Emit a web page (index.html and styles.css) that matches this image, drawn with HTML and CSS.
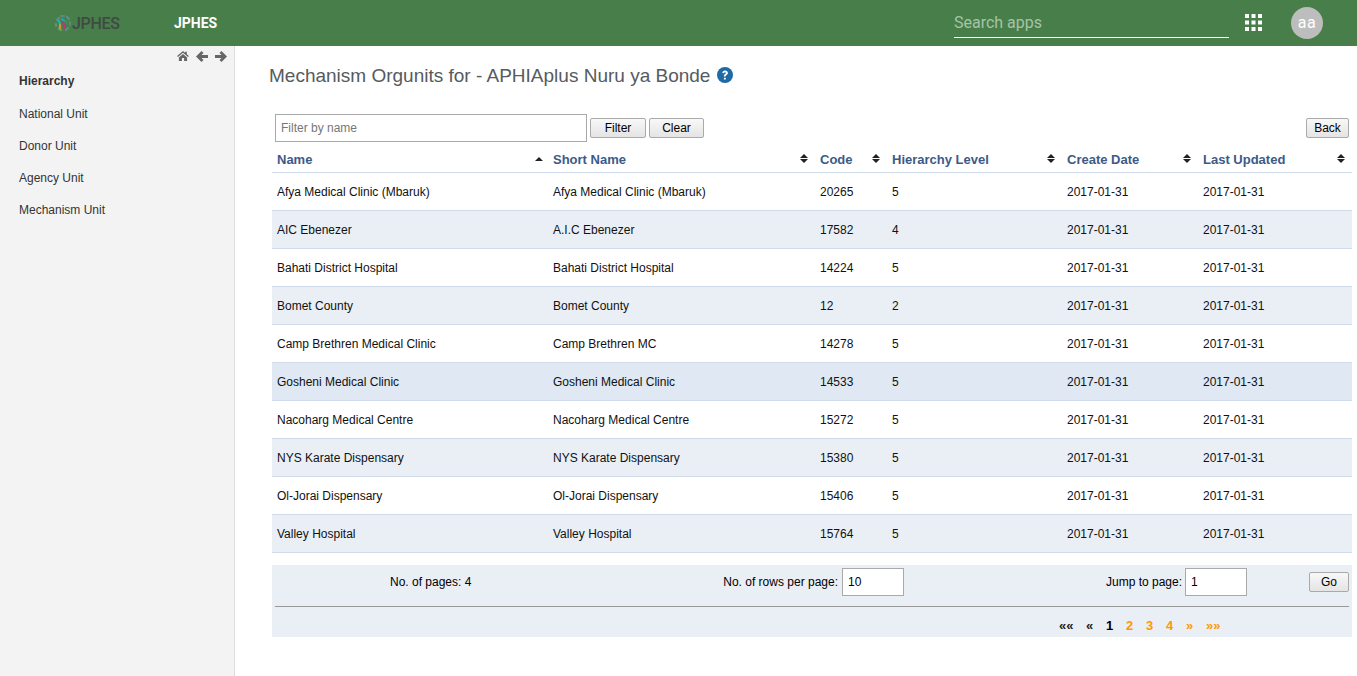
FILE: index.html
```html
<!DOCTYPE html>
<html lang="en">
<head>
  <meta charset="UTF-8">
  <title>Mechanism Orgunits</title>
  <link rel="stylesheet" href="styles.css">
</head>
<body>
  <header class="topbar">
    <div class="brand">
      <svg class="logo-mark" width="18" height="18" viewBox="0 0 18 18" fill="none" stroke-width="2.2" stroke-linecap="round">
        <path d="M3 6l2-2" stroke="#5f8f86"/>
        <path d="M7 2h3" stroke="#5d8a7c"/>
        <path d="M13 3l2 2" stroke="#5f8f86"/>
        <path d="M16 8v3" stroke="#5a8a78"/>
        <path d="M14 14l-2 2" stroke="#5f8f86"/>
        <path d="M2 10v2" stroke="#5f8f86"/>
        <path d="M5 15l2 1" stroke="#6d9a70"/>
        <path d="M5 7l1 3" stroke="#27b0b5"/>
        <path d="M8 5l2 2" stroke="#2aa7a0"/>
        <path d="M9 8l2 6" stroke="#b8377f"/>
        <path d="M6 11l0 3" stroke="#d49a2a"/>
        <path d="M12 7l1 3" stroke="#3f8f5a"/>
      </svg>
      <span class="logo-text">JPHES</span>
    </div>
    <div class="app-title">JPHES</div>
    <div class="search-box">Search apps</div>
    <svg class="apps-icon" width="17" height="17" viewBox="0 0 17 17" fill="#fff">
      <rect x="0" y="0" width="4" height="4"/><rect x="6.5" y="0" width="4" height="4"/><rect x="13" y="0" width="4" height="4"/>
      <rect x="0" y="6.5" width="4" height="4"/><rect x="6.5" y="6.5" width="4" height="4"/><rect x="13" y="6.5" width="4" height="4"/>
      <rect x="0" y="13" width="4" height="4"/><rect x="6.5" y="13" width="4" height="4"/><rect x="13" y="13" width="4" height="4"/>
    </svg>
    <div class="avatar">aa</div>
  </header>

  <div class="layout">
    <aside class="sidebar">
      <div class="side-icons">
        <svg width="12" height="10" viewBox="0 0 13 11" fill="#666"><path d="M6.500 0L0 5.600l1 1.100L6.500 2l5.500 4.700 1-1.100-2.300-2V.8H8.800v1.200zM2 7.200V11h3.300V7.800h2.400V11H11V7.200L6.500 3.400z"/></svg>
        <svg width="12" height="11" viewBox="0 0 12 11" fill="#666"><path d="M5.500 0L0 5.500 5.500 11l2-2L5.500 7H12V4H5.500l2-2z"/></svg>
        <svg width="12" height="11" viewBox="0 0 12 11" fill="#666"><path d="M6.500 0L12 5.500 6.500 11l-2-2 2-2H0V4h6.500l-2-2z"/></svg>
      </div>
      <nav class="side-nav">
        <a class="side-link active">Hierarchy</a>
        <a class="side-link">National Unit</a>
        <a class="side-link">Donor Unit</a>
        <a class="side-link">Agency Unit</a>
        <a class="side-link">Mechanism Unit</a>
      </nav>
    </aside>

    <main class="content">
      <h1 class="page-title">Mechanism Orgunits for - APHIAplus Nuru ya Bonde
        <svg class="help-icon" width="16" height="16" viewBox="0 0 16 16">
          <circle cx="8" cy="8" r="8" fill="#1f6aa5"/>
          <path d="M5.300 6.100C5.400 4.500 6.500 3.500 8.100 3.500c1.600 0 2.800 1 2.800 2.400 0 1.200-.7 1.700-1.400 2.200-.6.400-.8.600-.8 1.200v.3H6.900v-.5c0-1 .4-1.500 1.100-2 .6-.4.900-.7.900-1.100 0-.5-.4-.8-.9-.8-.6 0-.9.400-1 1zM6.900 10.700h1.900v1.800H6.900z" fill="#fff"/>
        </svg>
      </h1>

      <div class="toolbar">
        <input class="filter-input" type="text" placeholder="Filter by name">
        <button class="btn filter-btn">Filter</button>
        <button class="btn clear-btn">Clear</button>
        <button class="btn back-btn">Back</button>
      </div>

      <table class="grid">
        <colgroup>
          <col class="col-name"><col class="col-short"><col class="col-code">
          <col class="col-level"><col class="col-created"><col class="col-updated">
        </colgroup>
        <thead>
          <tr>
            <th class="sort-up">Name</th>
            <th class="sort">Short Name</th>
            <th class="sort">Code</th>
            <th class="sort">Hierarchy Level</th>
            <th class="sort">Create Date</th>
            <th class="sort">Last Updated</th>
          </tr>
        </thead>
        <tbody>
          <tr><td>Afya Medical Clinic (Mbaruk)</td><td>Afya Medical Clinic (Mbaruk)</td><td>20265</td><td>5</td><td>2017-01-31</td><td>2017-01-31</td></tr>
          <tr><td>AIC Ebenezer</td><td>A.I.C Ebenezer</td><td>17582</td><td>4</td><td>2017-01-31</td><td>2017-01-31</td></tr>
          <tr><td>Bahati District Hospital</td><td>Bahati District Hospital</td><td>14224</td><td>5</td><td>2017-01-31</td><td>2017-01-31</td></tr>
          <tr><td>Bomet County</td><td>Bomet County</td><td>12</td><td>2</td><td>2017-01-31</td><td>2017-01-31</td></tr>
          <tr><td>Camp Brethren Medical Clinic</td><td>Camp Brethren MC</td><td>14278</td><td>5</td><td>2017-01-31</td><td>2017-01-31</td></tr>
          <tr class="hover"><td>Gosheni Medical Clinic</td><td>Gosheni Medical Clinic</td><td>14533</td><td>5</td><td>2017-01-31</td><td>2017-01-31</td></tr>
          <tr><td>Nacoharg Medical Centre</td><td>Nacoharg Medical Centre</td><td>15272</td><td>5</td><td>2017-01-31</td><td>2017-01-31</td></tr>
          <tr><td>NYS Karate Dispensary</td><td>NYS Karate Dispensary</td><td>15380</td><td>5</td><td>2017-01-31</td><td>2017-01-31</td></tr>
          <tr><td>Ol-Jorai Dispensary</td><td>Ol-Jorai Dispensary</td><td>15406</td><td>5</td><td>2017-01-31</td><td>2017-01-31</td></tr>
          <tr><td>Valley Hospital</td><td>Valley Hospital</td><td>15764</td><td>5</td><td>2017-01-31</td><td>2017-01-31</td></tr>
        </tbody>
      </table>

      <div class="pager">
        <div class="pager-top">
          <span class="page-count">No. of pages: 4</span>
          <label class="rows-label">No. of rows per page:<input class="small-input" type="text" value="10"></label>
          <label class="jump-label">Jump to page:<input class="small-input" type="text" value="1"></label>
          <button class="btn go-btn">Go</button>
        </div>
        <div class="pager-links">
          <span class="pg first off">««</span>
          <span class="pg off">«</span>
          <span class="pg now">1</span>
          <a class="pg">2</a>
          <a class="pg">3</a>
          <a class="pg">4</a>
          <a class="pg">»</a>
          <a class="pg">»»</a>
        </div>
      </div>
    </main>
  </div>
</body>
</html>
```

FILE: styles.css
```css
* { margin: 0; padding: 0; box-sizing: border-box; }

html, body { height: 100%; overflow: hidden; }
body { font-family: "Liberation Sans", Arial, sans-serif; font-size: 12px; color: #000; background: #fff; }

/* top bar */
.topbar { height: 46px; background: #487e4a; display: flex; align-items: center; font-family: Roboto, sans-serif; }
.brand { width: 174px; padding-left: 54px; display: flex; align-items: center; }
.logo-mark { flex: none; }
.logo-text { font-size: 16px; font-weight: 500; color: #3f4a44; letter-spacing: -0.3px; }
.app-title { font-size: 14px; font-weight: 700; color: #fff; }
.search-box { margin-left: auto; width: 275px; height: 30px; margin-top: -1px; padding-top: 5px; border-bottom: 1px solid #fff; color: #a6c4a7; font-size: 16px; line-height: 19px; }
.apps-icon { margin-left: 16px; margin-top: -1px; }
.avatar { width: 32px; height: 32px; margin: -1px 34px 0 29px; border-radius: 50%; background: #bdbdbd; color: #fff; text-align: center; line-height: 32px; font-size: 16px; letter-spacing: 0.5px; }

.layout { display: flex; height: 630px; }

/* left menu */
.sidebar { width: 235px; flex: none; background: #f3f3f3; border-right: 1px solid #ddd; }
.side-icons { height: 22px; padding: 5px 7px 0 0; display: flex; justify-content: flex-end; gap: 7px; }
.side-link { display: block; height: 32px; padding-left: 19px; line-height: 26px; color: #333; }
.side-link.active { font-weight: 700; height: 33px; }

/* main area */
.content { flex: 1; padding: 0 5px 0 37px; min-width: 0; }
.page-title { font-size: 19px; font-weight: 400; color: #555b60; line-height: 22px; margin: 19px 0 0 -3px; display: flex; align-items: center; gap: 7px; }
.help-icon { flex: none; margin-top: -2px; }

.toolbar { display: flex; align-items: center; height: 28px; margin-top: 27px; padding-left: 3px; gap: 3px; }
.filter-input { width: 312px; height: 28px; border: 1px solid #a9a9a9; padding: 0 5px; font: 12px "Liberation Sans", Arial, sans-serif; }
.filter-input::placeholder { color: #777; }
.btn { height: 20px; border: 1px solid #aaa; border-radius: 2px; background: linear-gradient(#f8f8f8, #e4e4e4); font: 12px "Liberation Sans", Arial, sans-serif; color: #000; }
.filter-btn { width: 56px; }
.clear-btn { width: 55px; }
.back-btn { width: 43px; margin-left: auto; margin-right: 3px; }

/* table */
.grid { width: 1080px; border-collapse: collapse; table-layout: fixed; margin-top: 3px; }
.col-name { width: 276px; }
.col-short { width: 267px; }
.col-code { width: 72px; }
.col-level { width: 175px; }
.col-created { width: 136px; }
.col-updated { width: 154px; }
.grid th { height: 27px; padding: 2px 5px 0; text-align: left; font-size: 13px; color: #3d5a87; border-bottom: 1px solid #cfdbea; position: relative; }
.grid td { height: 38px; padding: 1px 5px 0; border-bottom: 1px solid #cfdbea; color: #111; }
.grid tbody tr:nth-child(even) { background: #eaeff6; }
.grid tbody tr.hover { background: #dfe8f3; }

/* sort arrows, drawn with css triangles */
.sort::before, .sort::after { content: ""; position: absolute; right: 7px; border-left: 4px solid transparent; border-right: 4px solid transparent; }
.sort::before { top: 9px; border-bottom: 4px solid #222; }
.sort::after { top: 14px; border-top: 4px solid #222; }
.sort-up::before { content: ""; position: absolute; top: 12px; right: 5px; border-left: 4px solid transparent; border-right: 4px solid transparent; border-bottom: 4px solid #222; }

/* pager */
.pager { width: 1080px; height: 72px; margin-top: 12px; background: #eaeff6; padding: 0 3px; }
.pager-top { height: 42px; padding-bottom: 7px; border-bottom: 1px solid #999; display: grid; grid-template-columns: 440px 391px 202px 1fr; align-items: center; }
.page-count { padding-left: 115px; }
.rows-label, .jump-label { display: flex; align-items: center; white-space: nowrap; }
.rows-label { justify-self: end; margin-right: 202px; gap: 4px; }
.jump-label { gap: 3px; }
.small-input { width: 62px; height: 28px; border: 1px solid #a9a9a9; padding: 0 5px; font: 12px "Liberation Sans", Arial, sans-serif; }
.go-btn { justify-self: end; width: 40px; }
.pager-links { display: flex; height: 30px; padding: 8px 0 0 784px; align-items: center; font-size: 13px; font-weight: 700; }
.pg { color: #f90; width: 20px; }
.pg.first { width: 27px; }
.pg.off { color: #222; }
.pg.now { color: #000; }
```
